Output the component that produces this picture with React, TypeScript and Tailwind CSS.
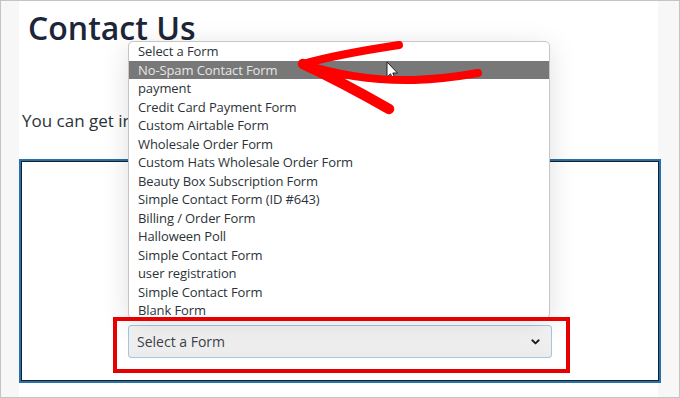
import React from "react";

const items = [
  "Select a Form",
  "No-Spam Contact Form",
  "payment",
  "Credit Card Payment Form",
  "Custom Airtable Form",
  "Wholesale Order Form",
  "Custom Hats Wholesale Order Form",
  "Beauty Box Subscription Form",
  "Simple Contact Form (ID #643)",
  "Billing / Order Form",
  "Halloween Poll",
  "Simple Contact Form",
  "user registration",
  "Simple Contact Form",
  "Blank Form",
];

export default function App() {
  return (
    <div
      className="relative w-[680px] h-[398px] overflow-hidden border border-[#c4c4c4] bg-[#f7f7f7]"
      style={{ fontFamily: '"Open Sans", "Noto Sans", sans-serif' }}
    >
      <div className="ml-[18px] w-[639px] h-full bg-white flex flex-col">
        <h1 className="ml-[9px] mt-[15px] text-[32px] leading-[24px] font-semibold text-[#1d2538]">
          Contact Us
        </h1>
        <p className="ml-[3px] mt-[69px] text-[17px] leading-[24px] text-[#2c3338] whitespace-nowrap">
          You can get in
        </p>
        <div className="mt-[26px] w-[642px] h-[224px] border-2 border-[#2271b1] shrink-0">
          <div className="w-full h-full border border-[#1e1e1e] flex items-end pl-[106px] pb-[22px]">
            <div className="w-[424px] h-[33px] rounded-[3px] border border-[#a3c6e2] bg-gradient-to-b from-[#f6f6f6] to-[#ebebeb] flex items-center justify-between pl-[8px] pr-[10px]">
              <span className="text-[14px] text-[#3c434a]">Select a Form</span>
              <svg width="9" height="6" viewBox="0 0 9 6" className="mr-[1px]">
                <path d="M1.3 1.3 L4.5 4.4 L7.7 1.3" fill="none" stroke="#1e1e1e" strokeWidth="1.9" strokeLinecap="round" strokeLinejoin="round" />
              </svg>
            </div>
          </div>
        </div>
      </div>

      {/* dropdown list */}
      <div className="absolute left-[127px] top-[40px] w-[422px] h-[278px] bg-white border border-[#c6c6c6] rounded-[5px] overflow-hidden shadow-[0_6px_28px_rgba(0,0,0,0.13)]">
        {items.map((t, i) => (
          <div
            key={i}
            className={
              i === 1
                ? "h-[18.5px] leading-[18.5px] pl-[9px] text-[13px] tracking-[-0.1px] bg-[#787878] text-[#e6e6e6] whitespace-nowrap"
                : "h-[18.5px] leading-[18.5px] pl-[9px] text-[13px] tracking-[-0.1px] text-[#2c3338] whitespace-nowrap"
            }
          >
            {t}
          </div>
        ))}
      </div>

      {/* red annotation box */}
      <div className="absolute left-[112px] top-[316px] w-[457px] h-[56px] border-[4px] border-[#e60000]" />

      {/* red arrow + cursor */}
      <svg className="absolute left-0 top-0" width="680" height="398" viewBox="0 0 680 398">
        <path d="M386 61 L386 76 L389.5 72.8 L392 78.5 L394.2 77.5 L391.8 72 L396.5 72 Z" fill="#fff" stroke="#222" strokeWidth="1" />
        <path d="M302 63 C330 55, 365 49, 398 44" fill="none" stroke="#ff0000" strokeWidth="8" strokeLinecap="round" />
        <path d="M302 63 C330 72, 370 80, 413 79 C440 78, 460 75, 477 72" fill="none" stroke="#ff0000" strokeWidth="8" strokeLinecap="round" />
        <path d="M302 63 C330 76, 360 92, 388 108" fill="none" stroke="#ff0000" strokeWidth="10.5" strokeLinecap="round" />
      </svg>
    </div>
  );
}
